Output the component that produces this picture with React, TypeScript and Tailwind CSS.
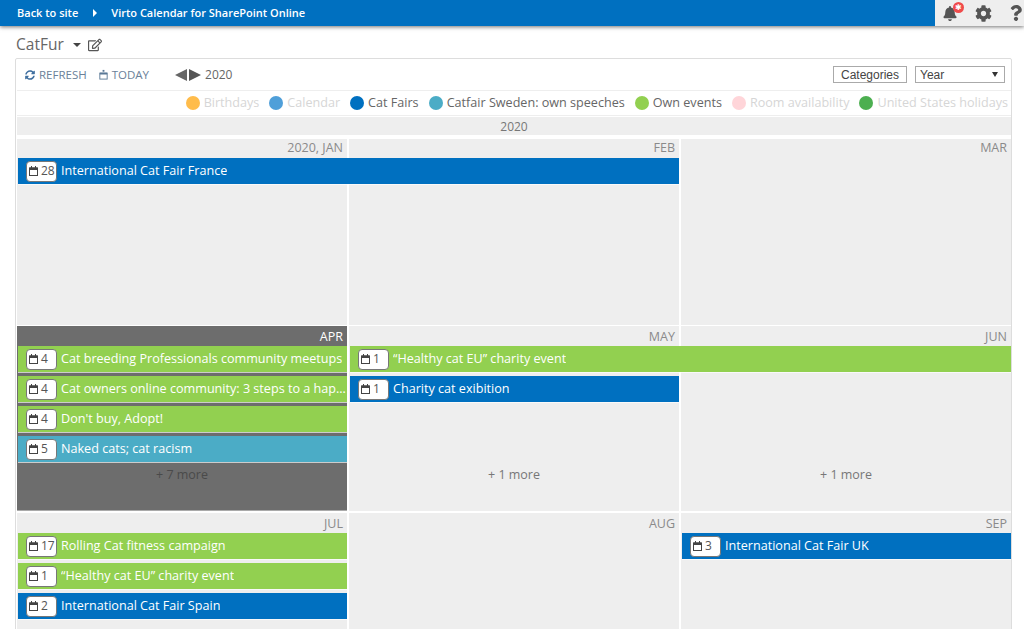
import { FaBell, FaCog, FaQuestion, FaRegEdit, FaSyncAlt } from 'react-icons/fa';

type Tone = 'blue' | 'green' | 'teal';

type CalEvent = {
  day: string;
  title: string;
  tone: Tone;
  column: string;
  row: string;
};

const toneStyles: Record<Tone, string> = {
  blue: 'bg-[#0070c0]',
  green: 'bg-[#92d050]',
  teal: 'bg-[#4bacc6]',
};

const legend = [
  { label: 'Birthdays', dot: 'bg-[#ffbc4b]', on: false },
  { label: 'Calendar', dot: 'bg-[#4f9fd9]', on: false },
  { label: 'Cat Fairs', dot: 'bg-[#0070c0]', on: true },
  { label: 'Catfair Sweden: own speeches', dot: 'bg-[#4bacc6]', on: true },
  { label: 'Own events', dot: 'bg-[#92d050]', on: true },
  { label: 'Room availability', dot: 'bg-[#ffd5d9]', on: false },
  { label: 'United States holidays', dot: 'bg-[#4caf50]', on: false },
];

const CalIcon = () => (
  <svg viewBox="0 0 9 10" className="h-[10px] w-[9px] shrink-0 text-[#444]" fill="none" stroke="currentColor">
    <rect x="0.5" y="2" width="8" height="7.5" strokeWidth="1" />
    <rect x="0.5" y="1.5" width="8" height="2.5" fill="currentColor" stroke="none" />
    <rect x="2" y="0" width="1" height="2" fill="currentColor" stroke="none" />
    <rect x="6" y="0" width="1" height="2" fill="currentColor" stroke="none" />
  </svg>
);

const TodayIcon = () => (
  <svg viewBox="0 0 12 12" className="h-[11px] w-[11px] text-[#5a7896]" fill="none" stroke="currentColor">
    <rect x="2" y="4.5" width="8" height="6.5" strokeWidth="1" />
    <rect x="2" y="4" width="8" height="2" fill="currentColor" stroke="none" />
    <rect x="5" y="1" width="2" height="2" fill="currentColor" stroke="none" />
  </svg>
);

function EventBar({ event }: { event: CalEvent }) {
  return (
    <div
      className={`${toneStyles[event.tone]} ${event.column} ${event.row} z-10 ml-px flex h-[26px] items-center overflow-hidden pl-[8px] pr-[1px] text-[12.6px] text-white shadow-[0_1px_0_rgba(255,255,255,0.65)]`}
    >
      <div className="flex h-[21px] w-[31px] shrink-0 items-center gap-[3px] rounded-[4px] border border-[#777] bg-white pl-[2px] text-[12px] text-[#555]">
        <CalIcon />
        <span>{event.day}</span>
      </div>
      <span className="ml-[4px] truncate">{event.title}</span>
    </div>
  );
}

function MonthCell({ label, column, active, top }: { label: string; column: string; active?: boolean; top?: string }) {
  return (
    <div
      className={`${column} ${top ?? ''} row-start-1 row-end-7 pr-[4px] text-right text-[12.5px] leading-[18px] ${
        active ? 'bg-[#6d6d6d] text-white shadow-[inset_0_-1px_0_#aaaaaa]' : 'bg-[#eeeeee] text-[#8a8a8a]'
      }`}
    >
      {label}
    </div>
  );
}

function MoreLink({ label, column, dark }: { label: string; column: string; dark?: boolean }) {
  return (
    <div className={`${column} row-start-6 z-10 text-center text-[12.5px] ${dark ? 'text-[#4a4a4a]' : 'text-[#777]'}`}>
      {label}
    </div>
  );
}

const firstRowGrid = 'grid grid-cols-[330px_330px_330px] grid-rows-[19px_30px_30px_30px_30px_1fr] gap-x-[2px]';
const rowGrid = 'grid grid-cols-[330px_330px_330px] grid-rows-[20px_30px_30px_30px_30px_1fr] gap-x-[2px]';

export default function App() {
  return (
    <div className="h-[629px] w-[1024px] overflow-hidden bg-white font-['Open_Sans',sans-serif] text-[#666]">
      <header className="flex h-[26px] bg-[#0070c0] shadow-[0_1px_4px_rgba(0,0,0,0.55)]">
        <nav className="flex flex-1 items-center pl-[17px] text-[11px] font-semibold text-white">
          <span>Back to site</span>
          <span className="ml-[15px] h-0 w-0 border-y-[4px] border-l-[4px] border-y-transparent border-l-white" />
          <span className="ml-[14px]">Virto Calendar for SharePoint Online</span>
        </nav>
        <div className="flex w-[89px] items-center bg-[#eeeeee] pl-[8px] text-[#555]">
          <div className="relative">
            <FaBell className="h-[15px] w-[14px]" />
            <span className="absolute -right-[7px] -top-[4px] flex h-[11px] w-[11px] items-center justify-center rounded-full bg-[#f04b4b] text-[8px] leading-none text-white">
              ✱
            </span>
          </div>
          <FaCog className="ml-[18px] h-[17px] w-[17px]" />
          <FaQuestion className="ml-[18px] h-[18px] w-[12px]" />
        </div>
      </header>

      <div className="flex h-[32px] items-center pl-[16px] pt-[5px] text-[#666]">
        <span className="text-[15.5px]">CatFur</span>
        <span className="ml-[9px] h-0 w-0 border-x-[4px] border-t-[4px] border-x-transparent border-t-[#444]" />
        <FaRegEdit className="ml-[7px] h-[14px] w-[14px] text-[#555]" />
      </div>

      <section className="ml-[15px] h-[580px] w-[997px] rounded-t-[2px] border border-[#dddddd] pl-[1px]">
        <div className="flex h-[32px] items-center border-b border-[#eeeeee] pl-[8px] pr-[6px] text-[11.5px] text-[#6a8199]">
          <FaSyncAlt className="h-[10px] w-[10px] text-[#3f6f9f]" />
          <span className="ml-[4px]">REFRESH</span>
          <span className="ml-[11px]">
            <TodayIcon />
          </span>
          <span className="ml-[3px]">TODAY</span>
          <span className="ml-[26px] h-0 w-0 border-y-[6px] border-r-[12px] border-y-transparent border-r-[#666]" />
          <span className="ml-[2px] h-0 w-0 border-y-[6px] border-l-[12px] border-y-transparent border-l-[#555]" />
          <span className="ml-[4px] text-[12px] text-[#666]">2020</span>
          <div className="ml-auto flex items-center gap-[8px] font-['Liberation_Sans',sans-serif] text-[12px] text-[#444]">
            <div className="flex h-[17px] w-[74px] items-center justify-center border border-[#aaa]">Categories</div>
            <div className="flex h-[17px] w-[90px] items-center justify-between border border-[#aaa] pl-[4px] pr-[6px]">
              <span>Year</span>
              <span className="h-0 w-0 border-x-[3px] border-t-[5px] border-x-transparent border-t-[#333]" />
            </div>
          </div>
        </div>

        <div className="flex h-[25px] items-center justify-end gap-[10px] border-b border-[#eeeeee] pr-[3px] text-[12.6px]">
          {legend.map((item) => (
            <div key={item.label} className="flex items-center gap-[4px]">
              <span className={`h-[14px] w-[14px] rounded-full ${item.dot}`} />
              <span className={item.on ? 'text-[#666]' : 'text-[#d6d6d6]'}>{item.label}</span>
            </div>
          ))}
        </div>

        <div className="mt-[1px] h-[18px] bg-[#eeeeee] text-center text-[12px] leading-[19px] text-[#777]">2020</div>

        <div className={`${firstRowGrid} mt-[4px] h-[186px]`}>
          <MonthCell label="2020, JAN" column="col-start-1" />
          <MonthCell label="FEB" column="col-start-2" />
          <MonthCell label="MAR" column="col-start-3" />
          <EventBar
            event={{ day: '28', title: 'International Cat Fair France', tone: 'blue', column: 'col-start-1 col-end-3', row: 'row-start-2' }}
          />
        </div>

        <div className={`${rowGrid} mt-[1px] h-[185px]`}>
          <MonthCell label="APR" column="col-start-1" active top="pt-[2px]" />
          <MonthCell label="MAY" column="col-start-2" top="pt-[2px]" />
          <MonthCell label="JUN" column="col-start-3" top="pt-[2px]" />
          <EventBar event={{ day: '4', title: 'Cat breeding Professionals community meetups', tone: 'green', column: 'col-start-1', row: 'row-start-2' }} />
          <EventBar event={{ day: '4', title: 'Cat owners online community: 3 steps to a happy cat', tone: 'green', column: 'col-start-1', row: 'row-start-3' }} />
          <EventBar event={{ day: '4', title: "Don't buy, Adopt!", tone: 'green', column: 'col-start-1', row: 'row-start-4' }} />
          <EventBar event={{ day: '5', title: 'Naked cats; cat racism', tone: 'teal', column: 'col-start-1', row: 'row-start-5' }} />
          <EventBar event={{ day: '1', title: '“Healthy cat EU” charity event', tone: 'green', column: 'col-start-2 col-end-4', row: 'row-start-2' }} />
          <EventBar event={{ day: '1', title: 'Charity cat exibition', tone: 'blue', column: 'col-start-2', row: 'row-start-3' }} />
          <MoreLink label="+ 7 more" column="col-start-1" dark />
          <MoreLink label="+ 1 more" column="col-start-2" />
          <MoreLink label="+ 1 more" column="col-start-3" />
        </div>

        <div className={`${rowGrid} mt-[2px] h-[186px]`}>
          <MonthCell label="JUL" column="col-start-1" top="pt-[2px]" />
          <MonthCell label="AUG" column="col-start-2" top="pt-[2px]" />
          <MonthCell label="SEP" column="col-start-3" top="pt-[2px]" />
          <EventBar event={{ day: '17', title: 'Rolling Cat fitness campaign', tone: 'green', column: 'col-start-1', row: 'row-start-2' }} />
          <EventBar event={{ day: '1', title: '“Healthy cat EU” charity event', tone: 'green', column: 'col-start-1', row: 'row-start-3' }} />
          <EventBar event={{ day: '2', title: 'International Cat Fair Spain', tone: 'blue', column: 'col-start-1', row: 'row-start-4' }} />
          <EventBar event={{ day: '3', title: 'International Cat Fair UK', tone: 'blue', column: 'col-start-3', row: 'row-start-2' }} />
        </div>
      </section>
    </div>
  );
}
